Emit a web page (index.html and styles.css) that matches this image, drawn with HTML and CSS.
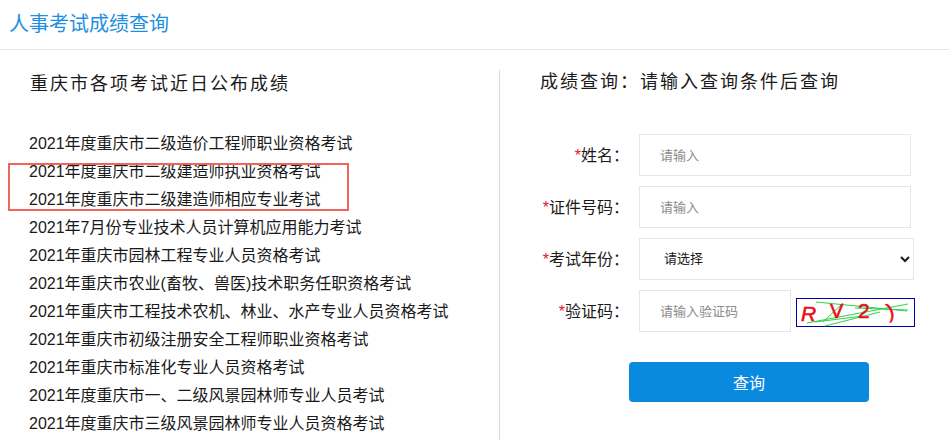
FILE: index.html
```html
<!DOCTYPE html>
<html lang="zh-CN">
<head>
    <meta charset="UTF-8">
    <meta name="viewport" content="width=device-width, initial-scale=1.0">
    <title>人事考试成绩查询</title>
    <link rel="stylesheet" href="styles.css">
</head>
<body>
    <div class="header">人事考试成绩查询</div>

    <div class="main">
        <div class="left">
            <h2>重庆市各项考试近日公布成绩</h2>
            <ul class="exam-list">
                <li>2021年度重庆市二级造价工程师职业资格考试</li>
                <li>2021年度重庆市二级建造师执业资格考试</li>
                <li>2021年度重庆市二级建造师相应专业考试</li>
                <li>2021年7月份专业技术人员计算机应用能力考试</li>
                <li>2021年重庆市园林工程专业人员资格考试</li>
                <li>2021年重庆市农业(畜牧、兽医)技术职务任职资格考试</li>
                <li>2021年重庆市工程技术农机、林业、水产专业人员资格考试</li>
                <li>2021年重庆市初级注册安全工程师职业资格考试</li>
                <li>2021年重庆市标准化专业人员资格考试</li>
                <li>2021年度重庆市一、二级风景园林师专业人员考试</li>
                <li>2021年度重庆市三级风景园林师专业人员资格考试</li>
            </ul>
        </div>

        <div class="right">
            <h2>成绩查询<span class="colon">：</span>请输入查询条件后查询</h2>
            <form class="query-form">
                <div class="row">
                    <label for="name"><i>*</i>姓名<span class="colon">：</span></label>
                    <input type="text" id="name" placeholder="请输入">
                </div>
                <div class="row">
                    <label for="idcard"><i>*</i>证件号码<span class="colon">：</span></label>
                    <input type="text" id="idcard" placeholder="请输入">
                </div>
                <div class="row">
                    <label for="year"><i>*</i>考试年份<span class="colon">：</span></label>
                    <select id="year">
                        <option>请选择</option>
                    </select>
                </div>
                <div class="row">
                    <label for="code"><i>*</i>验证码<span class="colon">：</span></label>
                    <input type="text" id="code" class="code-input" placeholder="请输入验证码">
                    <svg class="captcha" width="119" height="29" viewBox="0 0 119 29">
                        <rect x="0.5" y="0.5" width="118" height="28" fill="#fff" stroke="#0000a8"/>
                        <g stroke="#2ed24a" stroke-width="1" fill="none">
                            <path d="M20 4 L111 13"/>
                            <path d="M11 25 L112 6"/>
                            <path d="M29 28 L84 14"/>
                            <path d="M59 10 L112 12"/>
                            <path d="M27 24 L47 5"/>
                            <path d="M19 24 L67 18"/>
                        </g>
                        <g fill="#e8101c" stroke="#e8101c" stroke-width="0.6" font-family="'Liberation Sans', sans-serif">
                            <text x="5" y="23" font-size="21" font-style="italic">R</text>
                            <text x="34" y="20" font-size="20">V</text>
                            <text x="62" y="20" font-size="21">2</text>
                            <text x="91" y="20" font-size="20" transform="rotate(-14 94 13)">)</text>
                        </g>
                    </svg>
                </div>
                <button type="button" class="submit">查询</button>
            </form>
        </div>
    </div>

    <!-- red annotation box over the list -->
    <div class="mark"></div>
</body>
</html>
```

FILE: styles.css
```css
* {
    margin: 0;
    padding: 0;
    box-sizing: border-box;
}

html, body {
    height: 444px;
    overflow: hidden;
}

body {
    font-family: "Liberation Sans", "Noto Sans CJK SC", sans-serif;
    background-color: #fff;
    color: #1a1a1a;
    position: relative;
}

/* Header */
.header {
    height: 50px;
    padding: 13px 0 0 9px;
    font-size: 20px;
    line-height: 22px;
    color: #1e8fe1;
    border-bottom: 1px solid #e6e6e6;
}

.main {
    display: flex;
    padding-top: 20px;
}

h2 {
    font-size: 18px;
    font-weight: normal;
    line-height: 28px;
    letter-spacing: 2px;
}

/* the traditional face centres the fullwidth colon */
.colon {
    font-family: "Noto Sans CJK TC", sans-serif;
    line-height: 0;
}

/* Left column */
.left {
    width: 500px;
    height: 370px;
    padding-left: 29px;
    border-right: 1px solid #d8d8d8;
}

.left h2 {
    padding-left: 1px;
}

.exam-list {
    list-style: none;
    margin-top: 32px;
    font-size: 16px;
    line-height: 28px;
}

/* Right column */
.right {
    padding-left: 40px;
}

.right h2 {
    margin-top: -2px;
}

.query-form {
    margin-top: 38px;
}

.row {
    display: flex;
    align-items: center;
    height: 42px;
    margin-bottom: 10px;
}

.row label {
    width: 89px;
    margin-right: 10px;
    padding-bottom: 2px;
    text-align: right;
    font-size: 16px;
    white-space: nowrap;
}

.row i {
    color: #e8102c;
    font-style: normal;
}

input, select {
    height: 42px;
    border: 1px solid #e6e6e6;
    background-color: #fff;
    font-family: inherit;
    font-size: 13px;
    color: #1a1a1a;
    outline: none;
}

input {
    width: 272px;
    padding-left: 20px;
}

input::placeholder {
    color: #8c8c8c;
}

select {
    width: 275px;
    padding: 0 0 2px 20px;
}

.code-input {
    width: 152px;
}

.captcha {
    margin: 3px 0 0 5px;
}

.submit {
    display: block;
    width: 240px;
    height: 40px;
    margin: 30px 0 0 89px;
    border: none;
    border-radius: 4px;
    background-color: #0a8adf;
    color: #fff;
    font-family: inherit;
    font-size: 16px;
}

/* Annotation */
.mark {
    position: absolute;
    left: 8px;
    top: 163px;
    width: 341px;
    height: 48px;
    border: 2px solid #f0655a;
}
```
